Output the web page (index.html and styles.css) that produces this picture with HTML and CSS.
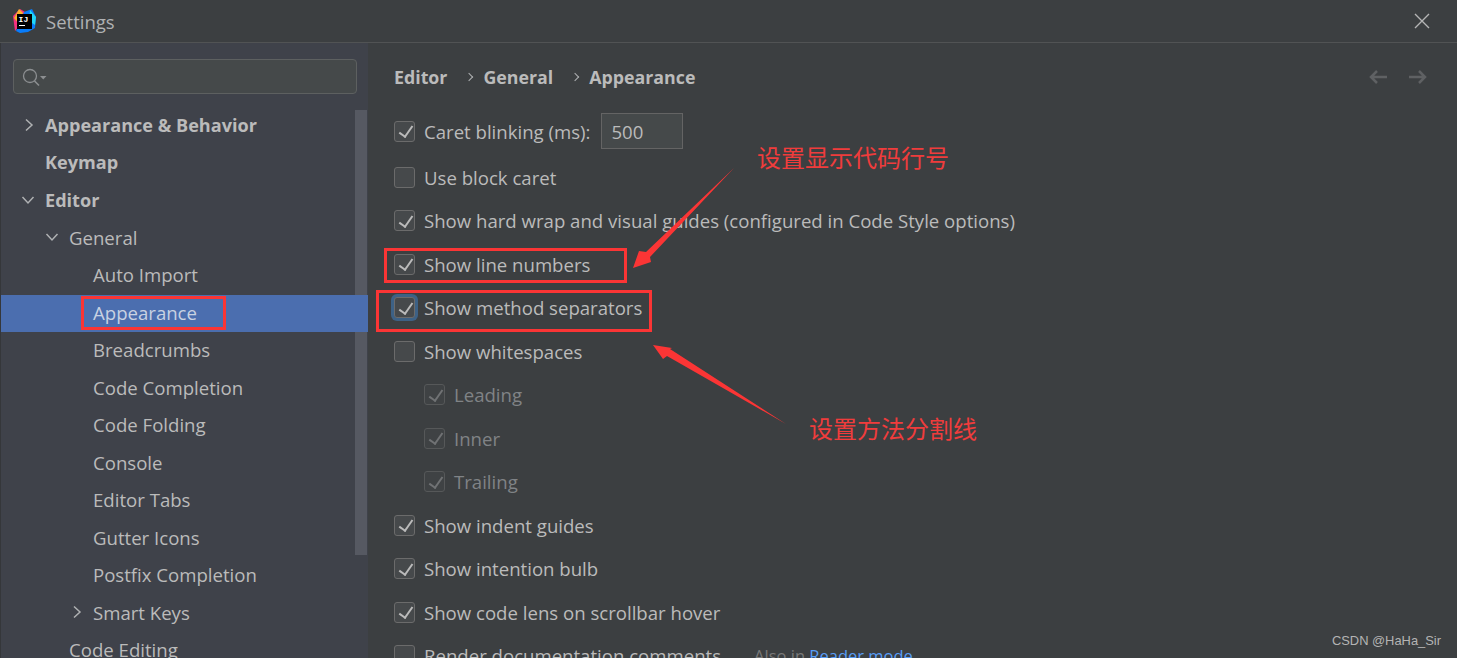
FILE: index.html
```html
<!DOCTYPE html>
<html lang="zh">
<head>
    <meta charset="UTF-8">
    <title>Settings</title>
    <link rel="stylesheet" href="styles.css">
</head>
<body>
    <header class="title-bar">
        <svg class="app-logo" width="24" height="24" viewBox="0 0 24 24">
            <polygon points="1,7 8,0 13,3 10,14 3,22" fill="#f5317f"/>
            <polygon points="2,9 7,0 11,4 6,14" fill="#fcb12a"/>
            <polygon points="12,3 20,0 24,8 23,19 16,23 8,24 4,22" fill="#087cfa"/>
            <polygon points="18,1 24,8 23,16 17,12" fill="#21d7f5"/>
            <rect x="5" y="5" width="15" height="15" fill="#000"/>
            <rect x="7" y="16" width="6" height="1" fill="#fff"/>
            <text x="6.600" y="12.600" class="logo-text">IJ</text>
        </svg>
        <span class="title-text">Settings</span>
        <svg class="close-icon" width="16" height="16" viewBox="0 0 16 16">
            <path d="M1 1L15 15M15 1L1 15" stroke="#b5b5b5" stroke-width="1.4" fill="none"/>
        </svg>
    </header>

    <div class="content">
        <aside class="sidebar">
            <div class="search-box">
                <svg width="30" height="22" viewBox="0 0 30 22">
                    <circle cx="9" cy="10" r="6.500" stroke="#8c8f91" stroke-width="1.300" fill="none"/>
                    <path d="M13.500 15L18 19.500" stroke="#8c8f91" stroke-width="1.600"/>
                    <path d="M19 10h6.500l-3.250 3.500z" fill="#8c8f91"/>
                </svg>
            </div>
            <div class="scrollbar"></div>
            <ul class="tree">
                <li class="tree-row lvl-0 bold"><svg class="arrow arrow-right" width="12" height="14" viewBox="0 0 12 14"><path d="M3 1.500L9 7L3 12.500" /></svg>Appearance &amp; Behavior</li>
                <li class="tree-row lvl-0 bold">Keymap</li>
                <li class="tree-row lvl-0 bold"><svg class="arrow" width="14" height="12" viewBox="0 0 14 12"><path d="M1.500 3L7 9L12.500 3" /></svg>Editor</li>
                <li class="tree-row lvl-1"><svg class="arrow" width="14" height="12" viewBox="0 0 14 12"><path d="M1.500 3L7 9L12.500 3" /></svg>General</li>
                <li class="tree-row lvl-2">Auto Import</li>
                <li class="tree-row lvl-2 selected">Appearance</li>
                <li class="tree-row lvl-2">Breadcrumbs</li>
                <li class="tree-row lvl-2">Code Completion</li>
                <li class="tree-row lvl-2">Code Folding</li>
                <li class="tree-row lvl-2">Console</li>
                <li class="tree-row lvl-2">Editor Tabs</li>
                <li class="tree-row lvl-2">Gutter Icons</li>
                <li class="tree-row lvl-2">Postfix Completion</li>
                <li class="tree-row lvl-2"><svg class="arrow arrow-right" width="12" height="14" viewBox="0 0 12 14"><path d="M3 1.500L9 7L3 12.500" /></svg>Smart Keys</li>
                <li class="tree-row lvl-1">Code Editing</li>
            </ul>
        </aside>

        <main class="panel">
            <div class="breadcrumb">
                <span>Editor</span><i class="crumb-sep"></i><span>General</span><i class="crumb-sep"></i><span>Appearance</span>
                <div class="nav-arrows">
                    <svg width="20" height="16" viewBox="0 0 20 16"><path d="M19 8H3M9 2L3 8L9 14" /></svg>
                    <svg width="20" height="16" viewBox="0 0 20 16"><path d="M1 8H17M11 2L17 8L11 14" /></svg>
                </div>
            </div>

            <div class="options">
                <label class="option first"><i class="check on"></i>Caret blinking (ms):<span class="num-input">500</span></label>
                <label class="option second"><i class="check"></i>Use block caret</label>
                <label class="option"><i class="check on"></i>Show hard wrap and visual guides (configured in Code Style options)</label>
                <label class="option"><i class="check on"></i>Show line numbers</label>
                <label class="option"><i class="check on focused"></i>Show method separators</label>
                <label class="option"><i class="check"></i>Show whitespaces</label>
                <label class="option sub"><i class="check on"></i>Leading</label>
                <label class="option sub"><i class="check on"></i>Inner</label>
                <label class="option sub"><i class="check on"></i>Trailing</label>
                <label class="option"><i class="check on"></i>Show indent guides</label>
                <label class="option"><i class="check on"></i>Show intention bulb</label>
                <label class="option"><i class="check on"></i>Show code lens on scrollbar hover</label>
                <label class="option"><i class="check"></i>Render documentation comments<span class="hint">Also in <a class="link">Reader mode</a></span></label>
            </div>
        </main>
    </div>

    <!-- red annotations drawn on top of the screenshot -->
    <div class="mark mark-appearance"></div>
    <div class="mark mark-lines"></div>
    <div class="mark mark-separators"></div>
    <svg class="arrows-layer" width="1457" height="658" viewBox="0 0 1457 658">
        <polygon points="734,168 646,252 639,251 633,268 651,262 650,257" fill="#fb3535"/>
        <polygon points="786,424 670,349 672,348 653,345 663,359 667,356" fill="#fb3535"/>
    </svg>
    <div class="note note-top">设置显示代码行号</div>
    <div class="note note-bottom">设置方法分割线</div>
    <div class="watermark">CSDN @HaHa_Sir</div>
</body>
</html>
```

FILE: styles.css
```css
* {
    box-sizing: border-box;
}

body {
    margin: 0;
    width: 1457px;
    height: 658px;
    overflow: hidden;
    position: relative;
    background: #3c3f41;
    color: #bbbbbb;
    font-family: 'Open Sans', 'Noto Sans', sans-serif;
    font-size: 18.600px;
}

.title-bar {
    height: 43px;
    display: flex;
    align-items: center;
    padding-left: 12px;
    border-bottom: 1px solid #515354;
    background: #3c3f41;
}

.app-logo {
    flex: none;
}

.logo-text {
    font-family: 'Liberation Mono', monospace;
    font-size: 8px;
    font-weight: bold;
    fill: #fff;
}

.title-text {
    margin-left: 10px;
    padding-top: 1px;
    font-size: 18.500px;
    color: #afb1b3;
}

.close-icon {
    margin-left: auto;
    margin-right: 27px;
}

.content {
    display: flex;
    height: 615px;
}

.sidebar {
    width: 368px;
    flex: none;
    position: relative;
    background: #3f424a;
    border-left: 1px solid #35373a;
    overflow: hidden;
}

.search-box {
    margin: 16px 0 0 12px;
    width: 344px;
    height: 35px;
    border: 1px solid #5d6060;
    border-radius: 4px;
    background: #45494a;
    display: flex;
    align-items: center;
    padding-left: 7px;
}

.scrollbar {
    position: absolute;
    top: 67px;
    left: 354px;
    width: 12px;
    height: 445px;
    background: #565962;
}

.tree {
    list-style: none;
    margin: 13px 0 0;
    padding: 0;
}

.tree-row {
    height: 37.500px;
    padding-bottom: 2px;
    display: flex;
    align-items: center;
    position: relative;
    white-space: nowrap;
}

.tree-row.bold {
    font-weight: 700;
    font-size: 18.100px;
}

.lvl-0 {
    padding-left: 44px;
}

.lvl-1 {
    padding-left: 68px;
}

.lvl-2 {
    padding-left: 92px;
}

.selected {
    background: #4b6eaf;
    color: #c8d2e2;
}

.arrow {
    position: absolute;
    margin-left: -24px;
}

.arrow-right {
    margin-left: -22px;
}

.arrow path {
    fill: none;
    stroke: #afb1b3;
    stroke-width: 1.500;
}

.panel {
    flex: 1;
    padding-left: 26px;
}

.breadcrumb {
    display: flex;
    align-items: center;
    height: 20px;
    margin-top: 24px;
    font-weight: 700;
    font-size: 17.800px;
    color: #bbbbbb;
}

.crumb-sep {
    width: 6px;
    height: 6px;
    margin: 0 11px 0 19px;
    border-top: 1px solid #afb1b3;
    border-right: 1px solid #afb1b3;
    transform: rotate(45deg);
}

.nav-arrows {
    margin-left: auto;
    margin-right: 29px;
    display: flex;
    gap: 20px;
}

.nav-arrows path {
    fill: none;
    stroke: #5f6163;
    stroke-width: 2.500;
}

.options {
    margin-top: 19.500px;
    display: flex;
    flex-direction: column;
}

.option {
    height: 43.500px;
    display: flex;
    align-items: center;
    white-space: nowrap;
}

.option.first {
    height: 49px;
}

.check {
    width: 21px;
    height: 21px;
    flex: none;
    margin-right: 9px;
    border: 1px solid #6b6b6b;
    border-radius: 3px;
    background: #46494b;
    position: relative;
}

.check.on::after {
    content: "";
    position: absolute;
    left: 6.500px;
    top: 1.500px;
    width: 6px;
    height: 12px;
    border-right: 2.500px solid #bbbbbb;
    border-bottom: 2.500px solid #bbbbbb;
    transform: rotate(35deg);
}

.check.focused {
    box-shadow: 0 0 0 3px #3d6185;
}

.sub {
    padding-left: 30px;
    color: #808386;
}

.sub .check {
    border-color: #565859;
    background: #3f4244;
}

.sub .check.on::after {
    border-color: #707274;
}

.num-input {
    width: 82px;
    height: 36px;
    margin-left: 11px;
    padding: 0 9px;
    display: flex;
    align-items: center;
    border: 1px solid #646464;
    background: #45494a;
}

.hint {
    margin-left: 33px;
    font-size: 16.500px;
    color: #787878;
}

.link {
    color: #589df6;
}

.mark {
    position: absolute;
    border: 3px solid #fb3535;
}

.mark-appearance {
    left: 81px;
    top: 296px;
    width: 145px;
    height: 34px;
}

.mark-lines {
    left: 384px;
    top: 248px;
    width: 243px;
    height: 35px;
}

.mark-separators {
    left: 376px;
    top: 290px;
    width: 276px;
    height: 42px;
}

.arrows-layer {
    position: absolute;
    left: 0;
    top: 0;
}

.note {
    position: absolute;
    color: #f03c3c;
    font-family: 'Noto Sans CJK SC', sans-serif;
    font-size: 24px;
    line-height: 30px;
    white-space: nowrap;
}

.note-top {
    left: 757px;
    top: 142px;
}

.note-bottom {
    left: 809px;
    top: 413px;
}

.watermark {
    position: absolute;
    right: 16px;
    top: 633px;
    font-family: 'Liberation Sans', Arial, sans-serif;
    font-size: 12.900px;
    color: #b4b4b4;
}
```
